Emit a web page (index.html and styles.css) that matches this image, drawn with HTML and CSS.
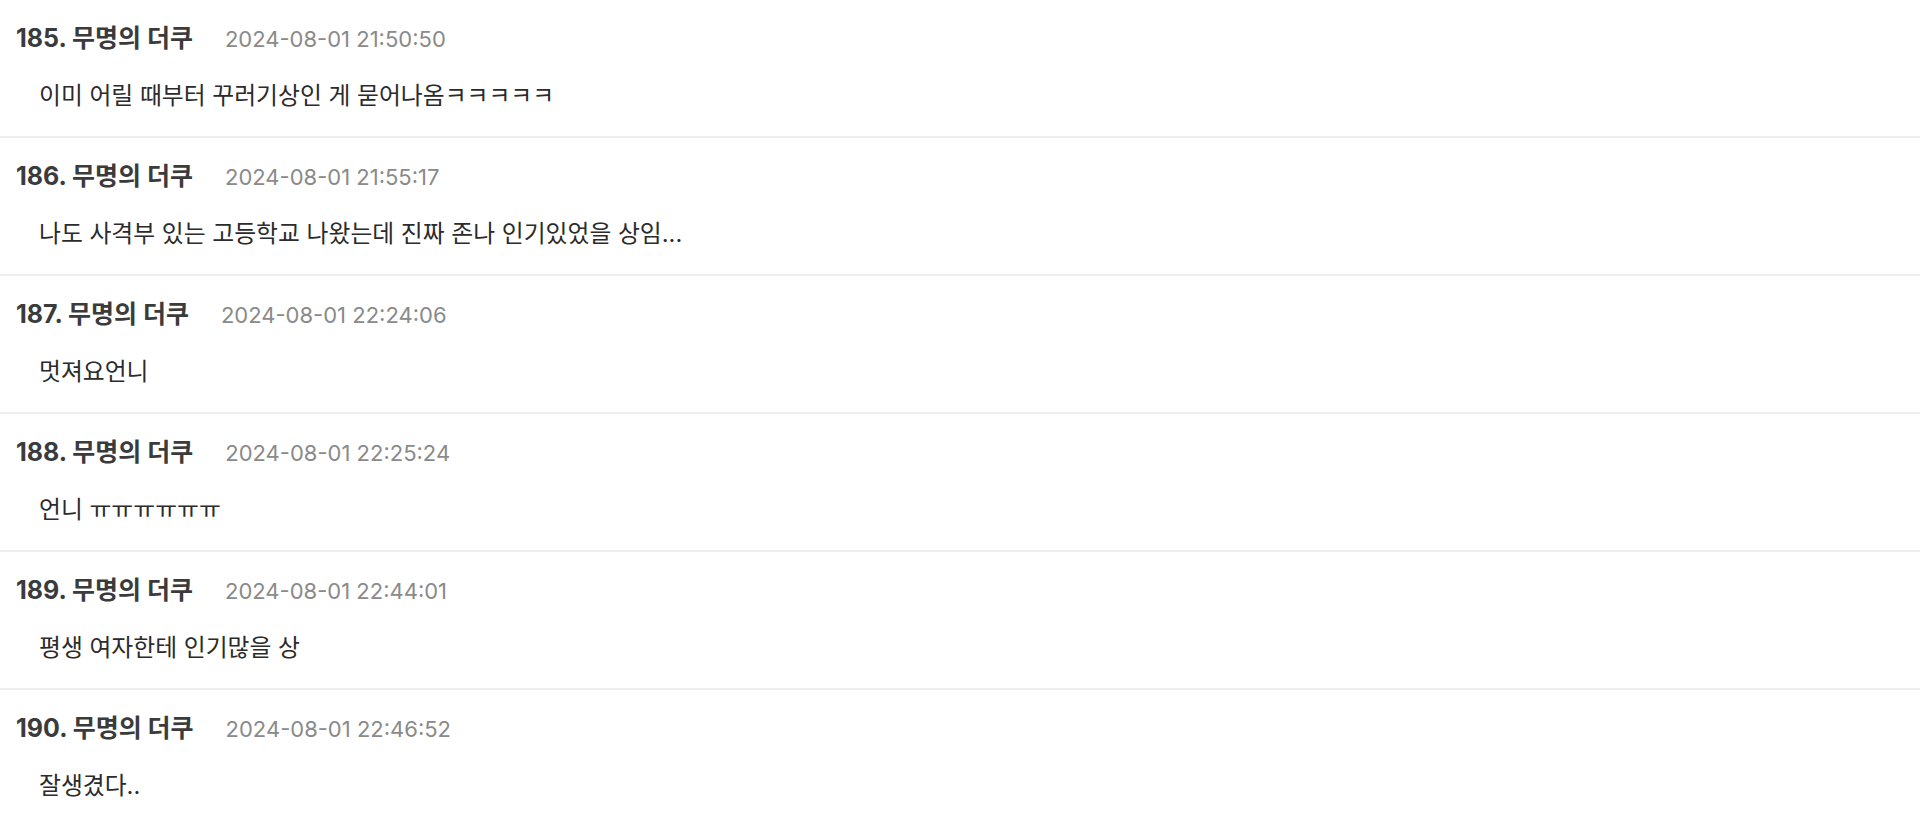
FILE: index.html
```html
<!DOCTYPE html>
<html lang="ko">
<head>
<meta charset="utf-8">
<link rel="stylesheet" href="styles.css">
</head>
<body>
<ul class="comments">
  <li class="comment">
    <div class="head"><span class="author">185. 무명의 더쿠</span><span class="date">2024-08-01 21:50:50</span></div>
    <div class="text">이미 어릴 때부터 꾸러기상인 게 묻어나옴ㅋㅋㅋㅋㅋ</div>
  </li>
  <li class="comment">
    <div class="head"><span class="author">186. 무명의 더쿠</span><span class="date">2024-08-01 21:55:17</span></div>
    <div class="text">나도 사격부 있는 고등학교 나왔는데 진짜 존나 인기있었을 상임...</div>
  </li>
  <li class="comment">
    <div class="head"><span class="author">187. 무명의 더쿠</span><span class="date">2024-08-01 22:24:06</span></div>
    <div class="text">멋져요언니</div>
  </li>
  <li class="comment">
    <div class="head"><span class="author">188. 무명의 더쿠</span><span class="date">2024-08-01 22:25:24</span></div>
    <div class="text">언니 ㅠㅠㅠㅠㅠㅠ</div>
  </li>
  <li class="comment">
    <div class="head"><span class="author">189. 무명의 더쿠</span><span class="date">2024-08-01 22:44:01</span></div>
    <div class="text">평생 여자한테 인기많을 상</div>
  </li>
  <li class="comment">
    <div class="head"><span class="author">190. 무명의 더쿠</span><span class="date">2024-08-01 22:46:52</span></div>
    <div class="text">잘생겼다..</div>
  </li>
</ul>
</body>
</html>
```

FILE: styles.css
```css
html, body {
  margin: 0;
  padding: 0;
  background: #ffffff;
}
body {
  font-family: Inter, "Noto Sans CJK KR", sans-serif;
  color: #333333;
}
.comments {
  list-style: none;
  margin: 0;
  padding: 0;
}
.comment {
  padding: 23px 16px 25px 16px;
  border-bottom: 2px solid #eeeeee;
}
.head {
  display: flex;
  align-items: baseline;
  gap: 32px;
  height: 30px;
  line-height: 30px;
}
.author {
  font-size: 25px;
  font-weight: 700;
  color: #3b3b3b;
}
.date {
  font-size: 22px;
  color: #8a8a8a;
}
.text {
  margin-top: 28px;
  padding-left: 23px;
  font-size: 23.8px;
  line-height: 30px;
  color: #2b2b2b;
}
```
